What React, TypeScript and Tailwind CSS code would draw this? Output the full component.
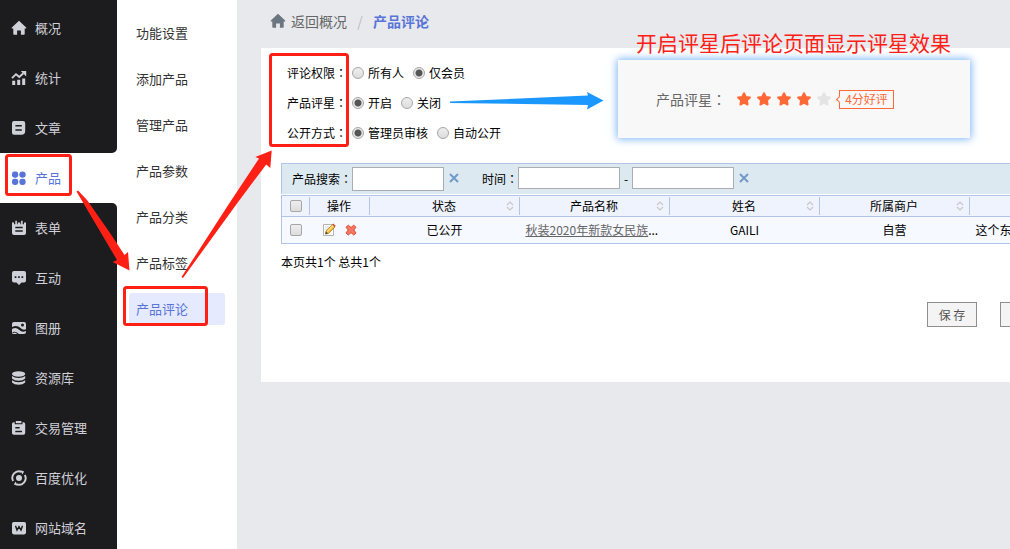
import React from 'react';

const icons: Record<string, React.ReactNode> = {
  home: <path d="M8 .8 15.200 7.600q.6.8-.4.900h-1.100v5.500q0 .8-.8.8H9.900V10.600H6.100v4.200H3.100q-.8 0-.8-.8V8.500H1.200Q.2 8.400.8 7.600z" />,
  stats: (
    <>
      <path d="M1 8.200 5 4.200 8.300 7 12.300 3.200" fill="none" stroke="currentColor" strokeWidth="1.900" />
      <path d="M9.800 1H15.200V6.400zM1.200 10.800h3V15h-3zM6.200 9.800h3V15h-3zM11.200 8.400h3V15h-3z" />
    </>
  ),
  article: <path fillRule="evenodd" d="M3 1h9q2.200 0 2.200 2.200V11q0 3.800-3.800 3.800H3q-2 0-2-2V3q0-2 2-2zM4.400 5v1.500h6.400V5zM4.400 9.200v1.500h6.400V9.200z" />,
  product: (
    <>
      <rect x="1" y="1.500" width="6.200" height="6.200" rx="2.400" />
      <circle cx="11.500" cy="4.600" r="3.200" />
      <rect x="1" y="8.800" width="6.200" height="6.200" rx="2.400" />
      <rect x="8.400" y="8.800" width="6.200" height="6.200" rx="2.400" />
    </>
  ),
  form: <path fillRule="evenodd" d="M1 2.500h2V4.200h1.300V.8H5.900v3.400h.8V2.500h2.600v1.700h.8V.8h1.600v3.400H13V2.500h2V13q0 2-2 2H3q-2 0-2-2zM4.300 6.800v1.500h7.400V6.800zM4.300 10.300v1.500h7.400v-1.500z" />,
  chat: <path fillRule="evenodd" d="M3 1h10q2 0 2 2v7.500q0 2-2 2h-2.500L8 15l-2.500-2.500H3q-2 0-2-2V3q0-2 2-2zM3.700 6.200v1.700h1.700V6.200zM7.100 6.200v1.700h1.700V6.200zM10.500 6.200v1.700h1.700V6.200z" />,
  album: (
    <>
      <path fillRule="evenodd" d="M3 2h10q2 0 2 2v5.200Q12 10.500 9.500 8 6 4.500 1 7V4q0-2 2-2zM11.500 3.600a1.500 1.500 0 1 0 0 3 1.500 1.500 0 1 0 0-3z" />
      <path d="M1 9q4-2.500 7 .700 3 3 7 1.400V12.200q0 1.800-2 1.800H8Q5 11.500 3 11.800 2 12 1 13z" />
      <path d="M1 13.500 4 12.600 6.500 14H2q-1 0-1-.5z" />
    </>
  ),
  database: (
    <>
      <ellipse cx="7.600" cy="4" rx="6.600" ry="2.700" />
      <path d="M1 6q2.500 2 6.600 2t6.600-2v2.600Q12 10.800 7.600 10.800T1 8.600zM1 10.300q2.500 2 6.600 2t6.600-2v2.200Q12 14.800 7.600 14.800T1 12.500z" />
    </>
  ),
  order: (
    <>
      <path fillRule="evenodd" d="M2.800 2.200h.9v2.100h7.800V2.200h.9q1.800 0 1.800 1.800v9q0 1.800-1.800 1.800H2.800Q1 14.800 1 13V4q0-1.800 1.800-1.800zM4.300 7v1.500h4.400V7zM4.300 10.800v1.500h6.700v-1.500z" />
      <path d="M4.800 1h5.600v2.200H4.800z" />
    </>
  ),
  seo: (
    <>
      <circle cx="8" cy="8" r="3" />
      <path d="M2.200 11A6.500 6.500 0 0 1 10.500 1.900M13.800 5A6.500 6.500 0 0 1 5.500 14.100" fill="none" stroke="currentColor" strokeWidth="1.900" />
      <path d="M9.500.2 13.200 1.500 11.300 4.600zM6.500 15.800 2.800 14.500 4.700 11.400z" />
    </>
  ),
  domain: (
    <>
      <rect x="1" y="2" width="14" height="12.400" rx="1.800" />
      <path d="M4.500 5.800 6 10.100 8 6.600 10 10.100 11.500 5.800" fill="none" stroke="#1c1c1e" strokeWidth="1.400" />
    </>
  ),
};

function Icon({ name }: { name: string }) {
  return (
    <svg viewBox="0 0 16 16" className="size-4 shrink-0" fill="currentColor" aria-hidden="true">
      {icons[name]}
    </svg>
  );
}

function NavItem({ icon, label, active = false }: { icon: string; label: string; active?: boolean }) {
  return (
    <a
      href="#"
      className={
        active
          ? 'flex h-[50px] shrink-0 items-center gap-2 pl-[11px] text-[#5874d8]'
          : 'flex h-[50px] shrink-0 items-center gap-2 pl-[11px] text-[#d0d0d8]'
      }
    >
      <Icon name={icon} />
      {label}
    </a>
  );
}

const topNav = [
  ['home', '概况'],
  ['stats', '统计'],
  ['article', '文章'],
];

const bottomNav = [
  ['form', '表单'],
  ['chat', '互动'],
  ['album', '图册'],
  ['database', '资源库'],
  ['order', '交易管理'],
  ['seo', '百度优化'],
  ['domain', '网站域名'],
];

const subMenu = ['功能设置', '添加产品', '管理产品', '产品参数', '产品分类', '产品标签', '产品评论'];

const settings = [
  { name: 'permission', label: '评论权限', options: ['所有人', '仅会员'], checked: 1 },
  { name: 'star', label: '产品评星', options: ['开启', '关闭'], checked: 0 },
  { name: 'publish', label: '公开方式', options: ['管理员审核', '自动公开'], checked: 0 },
];

// The TC face centres the full-width colon in its cell
function Colon() {
  return <span className="font-['Noto_Sans_CJK_TC',sans-serif]">：</span>;
}

function SettingRow({ name, label, options, checked }: (typeof settings)[number]) {
  return (
    <fieldset className="flex h-[30px] items-center">
      <legend className="float-left w-[65px] whitespace-nowrap">
        {label}
        <Colon />
      </legend>
      <div className="flex gap-[9px]">
        {options.map((option, i) => (
          <label key={option} className="flex items-center gap-1">
            <input
              type="radio"
              name={name}
              defaultChecked={i === checked}
              className="size-3 appearance-none rounded-full border border-[#a6a6a6] bg-linear-to-b from-[#eeeeee] to-[#dddddd] checked:bg-[radial-gradient(circle,#555555_0_3px,#e8e8e8_4px)]"
            />
            {option}
          </label>
        ))}
      </div>
    </fieldset>
  );
}

function Star({ on }: { on: boolean }) {
  return (
    <svg viewBox="0 0 16 16" className={on ? 'size-4 text-[#ff6837]' : 'size-4 text-[#e4e4e4]'} aria-hidden="true">
      <path
        d="M8 2.200 9.800 5.900 13.900 6.500 10.900 9.400 11.600 13.500 8 11.600 4.400 13.500 5.100 9.400 2.100 6.500 6.200 5.900z"
        fill="currentColor"
        stroke="currentColor"
        strokeWidth="2"
        strokeLinejoin="round"
      />
    </svg>
  );
}

function RatingPreview() {
  return (
    <div className="relative mt-3 flex h-[78px] w-[352px] shrink-0 items-center bg-[#f8f8f8] pl-[38px] text-[14px] text-[#666666] shadow-[0_0_8px_1px_#7ab4f8]">
      <p className="absolute -top-8 left-[18px] text-[21px] leading-7 whitespace-nowrap text-[#ff2015]">
        开启评星后评论页面显示评星效果
      </p>
      <span>
        产品评星
        <Colon />
      </span>
      <div className="ml-[10px] flex gap-1">
        {[1, 2, 3, 4, 5].map((n) => (
          <Star key={n} on={n <= 4} />
        ))}
      </div>
      <span className="relative ml-[7px] flex h-[19px] w-[55px] items-center justify-center border border-[#ff6837] text-[12px] text-[#ff6837]">
        <i className="absolute -left-[3px] size-[5px] rotate-45 border-b border-l border-[#ff6837] bg-[#f8f8f8]" />
        4分好评
      </span>
    </div>
  );
}

function ClearButton({ label }: { label: string }) {
  return (
    <button type="button" aria-label={label} className="mx-[5px] flex h-[22px] items-center text-[#7399c6]">
      <svg viewBox="0 0 10 10" className="size-[10px]" aria-hidden="true">
        <path d="M1 1 9 9M9 1 1 9" stroke="currentColor" strokeWidth="2" />
      </svg>
    </button>
  );
}

function SearchBar() {
  return (
    <form
      className="flex h-[31px] items-start border-t border-l border-[#b2c5e8] bg-[#dce9f1] pt-[3px] pl-[10px]"
      onSubmit={(e) => e.preventDefault()}
    >
      <label htmlFor="keyword" className="w-[60px] leading-6 whitespace-nowrap">
        产品搜索
        <Colon />
      </label>
      <input id="keyword" type="text" className="h-6 w-[92px] border border-[#abadb3] bg-white px-1" />
      <ClearButton label="清空搜索" />
      <label htmlFor="from" className="ml-[18px] w-9 leading-6 whitespace-nowrap">
        时间
        <Colon />
      </label>
      <input id="from" type="text" className="h-[22px] w-[102px] border border-[#abadb3] bg-white px-1" />
      <span className="w-3 text-center leading-6">-</span>
      <input type="text" aria-label="结束时间" className="h-[22px] w-[102px] border border-[#abadb3] bg-white px-1" />
      <ClearButton label="清空时间" />
    </form>
  );
}

function Checkbox({ label }: { label: string }) {
  return (
    <input
      type="checkbox"
      aria-label={label}
      className="block size-3 appearance-none rounded-[2px] border border-[#a6a6a6] bg-linear-to-b from-[#eeeeee] to-[#dddddd]"
    />
  );
}

function HeadCell({ title, sortable = true }: { title: string; sortable?: boolean }) {
  return (
    <th className="border-y border-[#b2c5e8] p-0 py-px font-normal">
      <div className="relative h-[18px] border-r border-[#b2c5e8] leading-[18px]">
        {title}
        {sortable && (
          <svg viewBox="0 0 8 10" className="absolute top-1 right-[5px] h-[10px] w-2" aria-hidden="true">
            <path d="M1 4 4 1 7 4M1 6 4 9 7 6" fill="none" stroke="#c8c8c8" strokeWidth="1.200" />
          </svg>
        )}
      </div>
    </th>
  );
}

function CommentTable() {
  return (
    <table className="mt-px w-full table-fixed border-collapse border-l border-[#b2c5e8] text-center">
      <colgroup>
        <col className="w-7" />
        <col className="w-[60px]" />
        <col className="w-[150px]" />
        <col className="w-[150px]" />
        <col className="w-[150px]" />
        <col className="w-[150px]" />
        <col />
      </colgroup>
      <thead className="bg-[#eff3fd]">
        <tr className="h-[21px]">
          <th className="border-y border-[#b2c5e8] p-0 py-px">
            <div className="flex h-[18px] items-center border-r border-[#b2c5e8] pl-2">
              <Checkbox label="全选" />
            </div>
          </th>
          <HeadCell title="操作" sortable={false} />
          <HeadCell title="状态" />
          <HeadCell title="产品名称" />
          <HeadCell title="姓名" />
          <HeadCell title="所属商户" />
          <th className="border-y border-[#b2c5e8] p-0" />
        </tr>
      </thead>
      <tbody className="bg-[#f6f9ff]">
        <tr className="h-[27px] border-b border-[#b2c5e8]">
          <td className="p-0 pl-2">
            <Checkbox label="选择" />
          </td>
          <td className="p-0">
            <div className="flex justify-center gap-2">
              <button type="button" aria-label="编辑">
                <svg viewBox="0 0 14 14" className="size-[14px]" aria-hidden="true">
                  <path d="M1.500 1.500h10v11h-10z" fill="#ffffff" stroke="#b4b5ae" />
                  <path d="M3 4h4M3 6h3" stroke="#d5d5d5" />
                  <path d="M4 8 10.500 1.500 13 4 6.500 10.500 3.500 11z" fill="#f3b62f" stroke="#a87524" strokeWidth=".7" />
                  <path d="M5.200 8.600 11.300 2.500" stroke="#ffe58c" strokeWidth="1.200" />
                  <path d="M10.300 1.700 11.400.6 13.800 3 12.700 4.100z" fill="#c8553d" />
                  <path d="M3.300 11.200 4 8.600 6 10.500z" fill="#444444" />
                </svg>
              </button>
              <button type="button" aria-label="删除">
                <svg viewBox="0 0 14 14" className="size-[14px]" aria-hidden="true">
                  <path
                    d="M2 4.300 4.300 2.200 7 4.500 9.700 2.200 12 4.300 9.700 7 12 9.900 9.700 12 7 9.600 4.300 12 2 9.900 4.300 7z"
                    fill="#f37a60"
                    stroke="#dc4430"
                  />
                </svg>
              </button>
            </div>
          </td>
          <td className="p-0">已公开</td>
          <td className="truncate p-0 px-[6px] text-left">
            <a href="#" className="text-[#666666] underline">
              秋装2020年新款女民族
            </a>
            ...
          </td>
          <td className="p-0">GAILI</td>
          <td className="p-0">自营</td>
          <td className="p-0 pl-[6px] text-left">这个东西</td>
        </tr>
      </tbody>
    </table>
  );
}

// Red frames and arrows that walk through the steps
function Annotations() {
  return (
    <svg className="pointer-events-none absolute top-0 left-0 h-[549px] w-[1010px]" aria-hidden="true">
      <g fill="none" stroke="#ff2015" strokeWidth="3">
        <rect x="6.500" y="155.500" width="64" height="39" rx="2" />
        <rect x="124.500" y="287.500" width="82" height="37" rx="2" />
        <rect x="270.500" y="54.500" width="77" height="91" rx="2" />
      </g>
      <path d="M76.500 191.500 78 190.500 87 200 110 233 124.500 255 128 252 129.500 270.500 112.700 262 117 260z" fill="#ff2015" />
      <path d="M181.500 277 229.500 203 259 158.500 255.300 157 271.700 150.500 270.300 168 266.200 164.500 237 203.500 183 278z" fill="#ff2015" />
      <path d="M450 101.500 588 95.500 587 92 603.500 100.500 587 109.500 588 105 450 103z" fill="#1a98ff" />
    </svg>
  );
}

export default function App() {
  return (
    <div className="relative flex h-screen overflow-hidden bg-[#e8e9ed] font-['Noto_Sans_CJK_SC',sans-serif] text-[12px] leading-[18px] text-black">
      <nav className="flex w-[117px] shrink-0 flex-col bg-white text-[13px]">
        <div className="shrink-0 rounded-br-[5px] bg-[#1c1c1e] pt-[3px]">
          {topNav.map(([icon, label]) => (
            <NavItem key={label} icon={icon} label={label} />
          ))}
        </div>
        <NavItem icon="product" label="产品" active />
        <div className="shrink-0 grow rounded-tr-[5px] bg-[#1c1c1e]">
          {bottomNav.map(([icon, label]) => (
            <NavItem key={label} icon={icon} label={label} />
          ))}
        </div>
      </nav>

      <nav className="flex w-[120px] shrink-0 flex-col gap-[14px] bg-white px-3 pt-[17px] text-[13px] text-[#333333]">
        {subMenu.map((item) => (
          <a
            key={item}
            href="#"
            className={
              item === '产品评论'
                ? 'flex h-8 shrink-0 items-center rounded-[3px] bg-[#e5eaff] pl-[7px] text-[#5874d8]'
                : 'flex h-8 shrink-0 items-center pl-[7px]'
            }
          >
            {item}
          </a>
        ))}
      </nav>

      <main className="min-w-0 grow overflow-hidden pl-6">
        <div className="flex h-12 items-center pb-[6px] pl-[9px] text-[14px] text-[#666666]">
          <a href="#" className="flex items-center gap-[5px]">
            <span className="text-[#6b7680]">
              <Icon name="home" />
            </span>
            返回概况
          </a>
          <span className="w-[26px] text-center text-[#b8bcc2]">/</span>
          <span className="font-bold text-[#5874d8]">产品评论</span>
        </div>

        <div className="w-[1455px] bg-white px-5 pb-[55px]">
          <div className="flex">
            <div className="w-[337px] shrink-0 pt-[10px] pl-[6px]">
              {settings.map((row) => (
                <SettingRow key={row.name} {...row} />
              ))}
            </div>
            <RatingPreview />
          </div>

          <div className="mt-[15px]">
            <SearchBar />
            <CommentTable />
          </div>

          <p className="mt-[9px]">本页共1个 总共1个</p>

          <div className="mt-[31px] flex justify-center gap-[23px]">
            <button type="button" className="h-[25px] w-[50px] border border-[#8e8e8e] bg-[#f4f4f4] text-[#555555]">
              保 存
            </button>
            <button type="button" className="h-[25px] w-[50px] border border-[#8e8e8e] bg-[#f4f4f4] text-[#555555]">
              取 消
            </button>
          </div>
        </div>
      </main>

      <Annotations />
    </div>
  );
}
